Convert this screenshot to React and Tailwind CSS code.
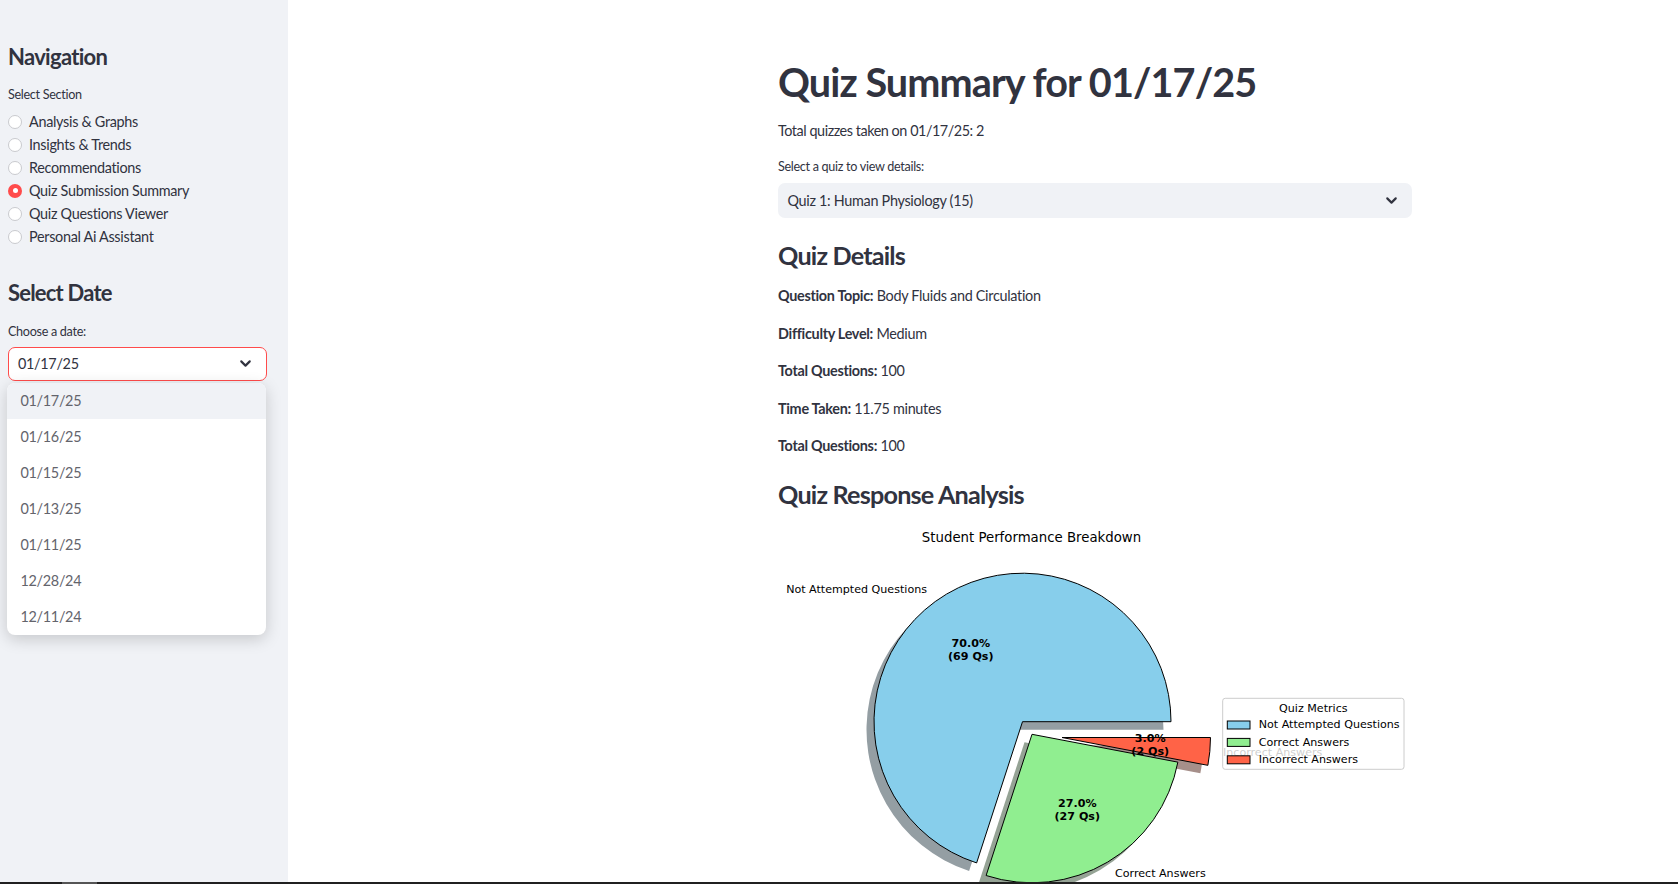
import React from "react";

function Chevron({ className = "" }) {
  return (
    <svg width="17" height="17" viewBox="0 0 24 24" fill="none" stroke="#31333F" strokeWidth="3" strokeLinecap="round" strokeLinejoin="round" className={className}>
      <path d="m6 9 6 6 6-6" />
    </svg>
  );
}

function Radio({ label, checked }) {
  return (
    <div className="flex h-[23px] items-center gap-[7px]">
      {checked ? (
        <span className="flex h-[14px] w-[14px] items-center justify-center rounded-full bg-[#ff4b4b]">
          <span className="h-[5px] w-[5px] rounded-full bg-white" />
        </span>
      ) : (
        <span className="h-[14px] w-[14px] rounded-full border border-[#c9cace] bg-white" />
      )}
      <span className="text-[14.4px] leading-[23px] tracking-[-0.3px]">{label}</span>
    </div>
  );
}

const dates = ["01/17/25", "01/16/25", "01/15/25", "01/13/25", "01/11/25", "12/28/24", "12/11/24"];

function Chart() {
  const blue = "M1022.5 721.7 L1171 721.7 A148.5 148.5 0 1 0 976.61 862.93 Z";
  const green = "M1032 734.3 L986.11 875.53 A148.5 148.5 0 0 0 1177.87 762.13 Z";
  const red = "M1062 737.5 L1207.87 765.33 A148.5 148.5 0 0 0 1210.5 737.5 Z";
  const dj = "DejaVu Sans, sans-serif";
  return (
    <svg width="634" height="371" viewBox="778 511 634 371" className="block overflow-hidden">
      <g transform="translate(-7.5 8)">
        <path d={blue} fill="#949ea3" />
        <path d={green} fill="#95a395" />
        <path d={red} fill="#a68f8a" />
      </g>
      <path d={blue} fill="#87CEEB" stroke="#000" strokeWidth="1" />
      <path d={green} fill="#90EE90" stroke="#000" strokeWidth="1" />
      <path d={red} fill="#FF6347" stroke="#000" strokeWidth="1" />

      <text x="1031.5" y="542" textAnchor="middle" fontFamily={dj} fontSize="13.3" fill="#000">Student Performance Breakdown</text>
      <text x="927" y="592.6" textAnchor="end" fontFamily={dj} fontSize="11.1" fill="#000">Not Attempted Questions</text>
      <text x="1115" y="877.3" textAnchor="start" fontFamily={dj} fontSize="11.1" fill="#000">Correct Answers</text>
      <text x="1223" y="755.7" textAnchor="start" fontFamily={dj} fontSize="11.1" fill="#000">Incorrect Answers</text>

      <g fontFamily={dj} fontSize="11.1" fontWeight="bold" fill="#000" textAnchor="middle">
        <text x="970.8" y="647.3">70.0%</text>
        <text x="970.8" y="660">(69 Qs)</text>
        <text x="1077.3" y="807.3">27.0%</text>
        <text x="1077.3" y="820">(27 Qs)</text>
        <text x="1150.2" y="742.3">3.0%</text>
        <text x="1150.2" y="754.7">(2 Qs)</text>
      </g>

      <rect x="1222.7" y="698.3" width="181.3" height="71" rx="2.5" fill="#fff" fillOpacity="0.8" stroke="#cccccc" strokeWidth="1" />
      <text x="1313.3" y="712.3" textAnchor="middle" fontFamily={dj} fontSize="11.1" fill="#000">Quiz Metrics</text>
      <rect x="1227.3" y="721" width="22.7" height="8" fill="#87CEEB" stroke="#000" strokeWidth="1" />
      <rect x="1227.3" y="738.4" width="22.7" height="8" fill="#90EE90" stroke="#000" strokeWidth="1" />
      <rect x="1227.3" y="755.8" width="22.7" height="8" fill="#FF6347" stroke="#000" strokeWidth="1" />
      <g fontFamily={dj} fontSize="11.1" fill="#000">
        <text x="1258.7" y="728.3">Not Attempted Questions</text>
        <text x="1258.7" y="745.7">Correct Answers</text>
        <text x="1258.7" y="763">Incorrect Answers</text>
      </g>
    </svg>
  );
}

export default function App() {
  return (
    <div className="flex h-[884px] w-full flex-col overflow-hidden bg-white text-[#31333F] [font-family:Lato,'Noto_Sans',sans-serif]">
      <div className="flex min-h-0 flex-1">
        <aside className="w-[288px] shrink-0 bg-[#f0f2f6] pl-[8px] pt-[41px]">
          <div className="h-[32px] text-[22px] font-bold leading-[32px] tracking-[-0.7px]">Navigation</div>
          <div className="mt-[12px] h-[20px] text-[12.6px] leading-[20px] tracking-[-0.3px]">Select Section</div>
          <div className="mt-[5px] flex flex-col">
            <Radio label="Analysis & Graphs" />
            <Radio label="Insights & Trends" />
            <Radio label="Recommendations" />
            <Radio label="Quiz Submission Summary" checked />
            <Radio label="Quiz Questions Viewer" />
            <Radio label="Personal Ai Assistant" />
          </div>
          <div className="mt-[29px] h-[32px] text-[22px] font-bold leading-[32px] tracking-[-0.8px]">Select Date</div>
          <div className="mt-[12.5px] h-[20px] text-[12.6px] leading-[20px] tracking-[-0.3px]">Choose a date:</div>
          <div className="relative mt-[5px] w-[259px]">
            <div className="flex h-[34.5px] items-center justify-between rounded-[7px] border border-[#ff4b4b] bg-white pl-[9px] pr-[12px] text-[14.4px] tracking-[-0.3px]">
              <span>01/17/25</span>
              <Chevron />
            </div>
            <div className="absolute left-[-1.5px] top-[36px] z-10 w-[259px] overflow-hidden rounded-[8px] bg-white shadow-[0_4px_16px_rgba(0,0,0,0.18)]">
              {dates.map((d, i) => (
                <div key={d} className={`flex h-[36px] items-center pl-[14px] text-[14.4px] tracking-[-0.3px] text-[#63646c] ${i === 0 ? "bg-[#f0f2f6]" : ""}`}>
                  {d}
                </div>
              ))}
            </div>
          </div>
        </aside>
        <main className="min-w-0 flex-1 pl-[490px] pt-[55.5px]">
          <div className="w-[634px]">
            <h1 className="h-[52px] text-[39.6px] font-bold leading-[52px] tracking-[-0.9px]">Quiz Summary for 01/17/25</h1>
            <p className="mt-[11.5px] h-[24px] text-[14.4px] leading-[24px] tracking-[-0.45px]">Total quizzes taken on 01/17/25: 2</p>
            <div className="mt-[14px] h-[20px] text-[12.6px] leading-[20px] tracking-[-0.3px]">Select a quiz to view details:</div>
            <div className="mt-[6px] flex h-[35px] items-center justify-between rounded-[7px] bg-[#f0f2f6] pl-[9.5px] pr-[12px] text-[14.4px] tracking-[-0.3px]">
              <span>Quiz 1: Human Physiology (15)</span>
              <Chevron />
            </div>
            <h3 className="mt-[20px] h-[34px] text-[25.2px] font-bold leading-[34px] tracking-[-0.8px]">Quiz Details</h3>
            <div className="mt-[5.5px] text-[14.4px] tracking-[-0.3px]">
              <div className="flex h-[37.5px] items-center"><span><b className="font-bold">Question Topic:</b> Body Fluids and Circulation</span></div>
              <div className="flex h-[37.5px] items-center"><span><b className="font-bold">Difficulty Level:</b> Medium</span></div>
              <div className="flex h-[37.5px] items-center"><span><b className="font-bold">Total Questions:</b> 100</span></div>
              <div className="flex h-[37.5px] items-center"><span><b className="font-bold">Time Taken:</b> 11.75 minutes</span></div>
              <div className="flex h-[37.5px] items-center"><span><b className="font-bold">Total Questions:</b> 100</span></div>
            </div>
            <h3 className="mt-[12px] h-[34px] text-[25.2px] font-bold leading-[34px] tracking-[-0.8px]">Quiz Response Analysis</h3>
            <Chart />
          </div>
        </main>
      </div>
      <div className="flex h-[2px] shrink-0 bg-[#202020]">
        <div className="ml-[62px] w-[35px] bg-[#555]" />
      </div>
    </div>
  );
}
